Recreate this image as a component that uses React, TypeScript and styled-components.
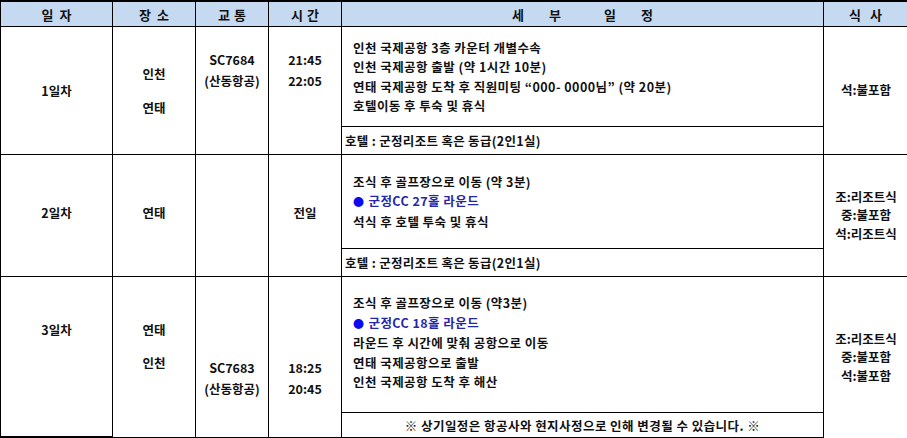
import React from 'react';
import styled, { createGlobalStyle } from 'styled-components';

const Global = createGlobalStyle`
  html, body { margin: 0; padding: 0; background: #fff; overflow: hidden; }
  body {
    font-family: "Malgun Gothic", "Noto Sans CJK KR", "Noto Sans", sans-serif;
    color: #111;
  }
`;

const Table = styled.div`
  display: grid;
  grid-template-columns: 112px 83px 73px 73px 482px 84px;
  grid-template-rows: 25px 128px 122px 161px;
  width: max-content;
  border-top: 2px solid #000;
  border-left: 1px solid #000;
  font-size: 12.5px;
  font-weight: 700;
`;

const HeadCell = styled.div<{ $gap: number }>`
  box-sizing: border-box;
  background: #c5d9f1;
  border-right: 1px solid #000;
  border-bottom: 1px solid #000;
  display: flex;
  align-items: center;
  justify-content: center;
  gap: ${(p) => p.$gap}px;
  font-size: 13px;
  line-height: 1;
`;

const HeadChar = styled.span<{ $extra?: number }>`
  margin-right: ${(p) => p.$extra ?? 0}px;
`;

const Cell = styled.div<{ $pt?: number; $gap?: number; $bottom?: number; $lh?: number }>`
  box-sizing: border-box;
  border-right: 1px solid #000;
  border-bottom: ${(p) => (p.$bottom ?? 1)}px solid #000;
  display: flex;
  flex-direction: column;
  align-items: center;
  justify-content: ${(p) => (p.$pt !== undefined ? 'flex-start' : 'center')};
  padding-top: ${(p) => p.$pt ?? 0}px;
  gap: ${(p) => p.$gap ?? 0}px;
  line-height: ${(p) => p.$lh ?? 20}px;
  text-align: center;
  white-space: nowrap;
`;

const DetailCell = styled.div`
  box-sizing: border-box;
  border-right: 1px solid #000;
  border-bottom: 1px solid #000;
  display: flex;
  flex-direction: column;
`;

const DetailMain = styled.div<{ $pb?: number }>`
  flex: 1;
  border-bottom: 1px solid #000;
  padding: 0 0 ${(p) => p.$pb ?? 0}px 11px;
  display: flex;
  flex-direction: column;
  justify-content: center;
  line-height: 19.5px;
  white-space: nowrap;
`;

const DetailFoot = styled.div<{ $h: number; $center?: boolean }>`
  height: ${(p) => p.$h}px;
  display: flex;
  align-items: center;
  justify-content: ${(p) => (p.$center ? 'center' : 'flex-start')};
  padding-left: ${(p) => (p.$center ? 0 : 3)}px;
  letter-spacing: ${(p) => (p.$center ? 0.45 : 0.3)}px;
  white-space: nowrap;
`;

const Line = styled.div<{ $blue?: boolean }>`
  color: ${(p) => (p.$blue ? '#2626aa' : 'inherit')};
  letter-spacing: 0.45px;
`;

const Dot = styled.span`
  color: #0b0bf0;
  font-size: 11px;
  margin-right: 4px;
`;

const MealCell = styled(Cell)`
  border-right: none;
`;

const heads: { chars: string[]; gap: number; extra?: number[] }[] = [
  { chars: ['일', '자'], gap: 6 },
  { chars: ['장', '소'], gap: 6 },
  { chars: ['교', '통'], gap: 4 },
  { chars: ['시', '간'], gap: 4 },
  { chars: ['세', '부', '일', '정'], gap: 25, extra: [0, 18, 0, 0] },
  { chars: ['식', '사'], gap: 9 },
];

export default function App() {
  return (
    <>
      <Global />
      <Table>
        {heads.map((h, i) => (
          <HeadCell key={i} $gap={h.gap}>
            {h.chars.map((c, j) => (
              <HeadChar key={j} $extra={h.extra ? h.extra[j] : 0}>
                {c}
              </HeadChar>
            ))}
          </HeadCell>
        ))}

        {/* Day 1 */}
        <Cell>1일차</Cell>
        <Cell $gap={14}>
          <div>인천</div>
          <div>연태</div>
        </Cell>
        <Cell $pt={22} $lh={21}>
          <div>SC7684</div>
          <div>(산동항공)</div>
        </Cell>
        <Cell $pt={22} $lh={21}>
          <div>21:45</div>
          <div>22:05</div>
        </Cell>
        <DetailCell>
          <DetailMain>
            <Line>인천 국제공항 3층 카운터 개별수속</Line>
            <Line>인천 국제공항 출발 (약 1시간 10분)</Line>
            <Line>연태 국제공항 도착 후 직원미팅 “000- 0000님” (약 20분)</Line>
            <Line>호텔이동 후 투숙 및 휴식</Line>
          </DetailMain>
          <DetailFoot $h={27}>호텔 : 군정리조트 혹은 동급(2인1실)</DetailFoot>
        </DetailCell>
        <MealCell $lh={18.5}>
          <div>석:불포함</div>
        </MealCell>

        {/* Day 2 */}
        <Cell $pt={48}>2일차</Cell>
        <Cell $pt={48}>연태</Cell>
        <Cell />
        <Cell $pt={48}>전일</Cell>
        <DetailCell>
          <DetailMain>
            <Line>조식 후 골프장으로 이동 (약 3분)</Line>
            <Line $blue>
              <Dot>●</Dot>군정CC 27홀 라운드
            </Line>
            <Line>석식 후 호텔 투숙 및 휴식</Line>
          </DetailMain>
          <DetailFoot $h={27}>호텔 : 군정리조트 혹은 동급(2인1실)</DetailFoot>
        </DetailCell>
        <MealCell $lh={18.5}>
          <div>조:리조트식</div>
          <div>중:불포함</div>
          <div>석:리조트식</div>
        </MealCell>

        {/* Day 3 */}
        <Cell $pt={43} $bottom={2}>3일차</Cell>
        <Cell $pt={43} $gap={13}>
          <div>연태</div>
          <div>인천</div>
        </Cell>
        <Cell $pt={80} $lh={21}>
          <div>SC7683</div>
          <div>(산동항공)</div>
        </Cell>
        <Cell $pt={80} $lh={21}>
          <div>18:25</div>
          <div>20:45</div>
        </Cell>
        <DetailCell>
          <DetailMain $pb={4}>
            <Line>조식 후 골프장으로 이동 (약3분)</Line>
            <Line $blue>
              <Dot>●</Dot>군정CC 18홀 라운드
            </Line>
            <Line>라운드 후 시간에 맞춰 공항으로 이동</Line>
            <Line>연태 국제공항으로 출발</Line>
            <Line>인천 국제공항 도착 후 해산</Line>
          </DetailMain>
          <DetailFoot $h={24} $center>
            ※ 상기일정은 항공사와 현지사정으로 인해 변경될 수 있습니다. ※
          </DetailFoot>
        </DetailCell>
        <MealCell $lh={18.5} $bottom={0}>
          <div>조:리조트식</div>
          <div>중:불포함</div>
          <div>석:불포함</div>
        </MealCell>
      </Table>
    </>
  );
}
